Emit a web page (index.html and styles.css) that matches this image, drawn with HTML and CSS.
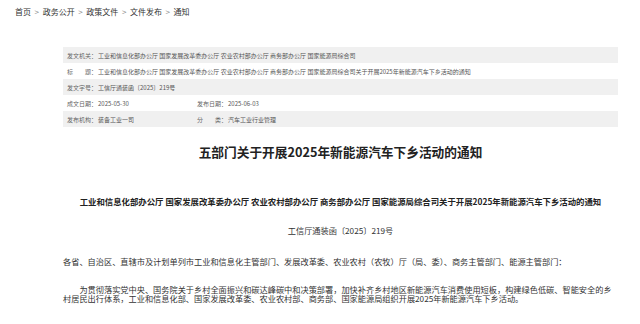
FILE: index.html
```html
<!DOCTYPE html>
<html lang="zh-CN">
<head>
<meta charset="utf-8">
<title>五部门关于开展2025年新能源汽车下乡活动的通知</title>
<link rel="stylesheet" href="styles.css">
</head>
<body>
<nav class="crumbs">
  <a>首页</a><span class="sep">&gt;</span><a>政务公开</a><span class="sep">&gt;</span><a>政策文件</a><span class="sep">&gt;</span><a>文件发布</a><span class="sep">&gt;</span><a>通知</a>
</nav>
<main class="page">
  <div class="meta">
    <div class="row gray">
      <div class="cell"><span class="label">发文机关：</span><span>工业和信息化部办公厅 国家发展改革委办公厅 农业农村部办公厅 商务部办公厅 国家能源局综合司</span></div>
    </div>
    <div class="row">
      <div class="cell"><span class="label">标　　题：</span><span>工业和信息化部办公厅 国家发展改革委办公厅 农业农村部办公厅 商务部办公厅 国家能源局综合司关于开展2025年新能源汽车下乡活动的通知</span></div>
    </div>
    <div class="row gray">
      <div class="cell"><span class="label">发文字号：</span><span>工信厅通装函〔2025〕219号</span></div>
    </div>
    <div class="row two">
      <div class="cell"><span class="label">成文日期：</span><span>2025-05-30</span></div>
      <div class="cell"><span class="label">发布日期：</span><span>2025-06-03</span></div>
    </div>
    <div class="row two gray">
      <div class="cell"><span class="label">发布机构：</span><span>装备工业一司</span></div>
      <div class="cell"><span class="label">分　　类：</span><span>汽车工业行业管理</span></div>
    </div>
  </div>

  <h1 class="title">五部门关于开展2025年新能源汽车下乡活动的通知</h1>

  <article class="doc">
    <h2 class="doc-head">工业和信息化部办公厅 国家发展改革委办公厅 农业农村部办公厅 商务部办公厅 国家能源局综合司关于开展2025年新能源汽车下乡活动的通知</h2>
    <p class="doc-no">工信厅通装函〔2025〕219号</p>
    <p class="addr">各省、自治区、直辖市及计划单列市工业和信息化主管部门、发展改革委、农业农村（农牧）厅（局、委）、商务主管部门、能源主管部门：</p>
    <p class="para">为贯彻落实党中央、国务院关于乡村全面振兴和碳达峰碳中和决策部署，加快补齐乡村地区新能源汽车消费使用短板，构建绿色低碳、智能安全的乡村居民出行体系，工业和信息化部、国家发展改革委、农业农村部、商务部、国家能源局组织开展2025年新能源汽车下乡活动。</p>
  </article>
</main>
</body>
</html>
```

FILE: styles.css
```css
html, body {
  margin: 0;
  padding: 0;
  background: #ffffff;
}
body {
  font-family: "Noto Sans CJK SC", "Liberation Sans", sans-serif;
  color: #333333;
  width: 640px;
  height: 324px;
  overflow: hidden;
}
.crumbs {
  height: 24px;
  line-height: 24px;
  padding-left: 15px;
  font-size: 8px;
  color: #333333;
  display: flex;
  align-items: center;
}
.crumbs .sep {
  color: #888888;
  margin: 0 3.6px;
}
.page {
  margin-left: 63px;
  width: 555px;
}
.meta {
  margin-top: 23px;
  font-size: 6px;
  color: #555555;
}
.row {
  height: 16px;
  display: flex;
  align-items: center;
  padding-left: 4px;
}
.row.gray {
  background: #f0f0f0;
}
.row.two .cell:first-child {
  width: 130px;
}
.cell {
  white-space: nowrap;
  display: flex;
}
.label {
  width: 31px;
  flex: none;
  color: #666666;
}
.title {
  margin: 17px 0 0;
  font-size: 12.7px;
  line-height: 16px;
  font-weight: 700;
  text-align: center;
  color: #222222;
}
.doc {
  font-size: 8.2px;
  color: #333333;
}
.doc-head {
  margin: 35px 0 0;
  font-size: 8.4px;
  line-height: 12px;
  font-weight: 700;
  text-align: center;
  color: #222222;
  white-space: nowrap;
}
.doc-no {
  margin: 17px 0 0;
  line-height: 12px;
  text-align: center;
}
.addr {
  margin: 19px 0 0;
  line-height: 12px;
}
.para {
  margin: 17.5px 0 0;
  line-height: 9px;
  text-indent: 2em;
}
```
